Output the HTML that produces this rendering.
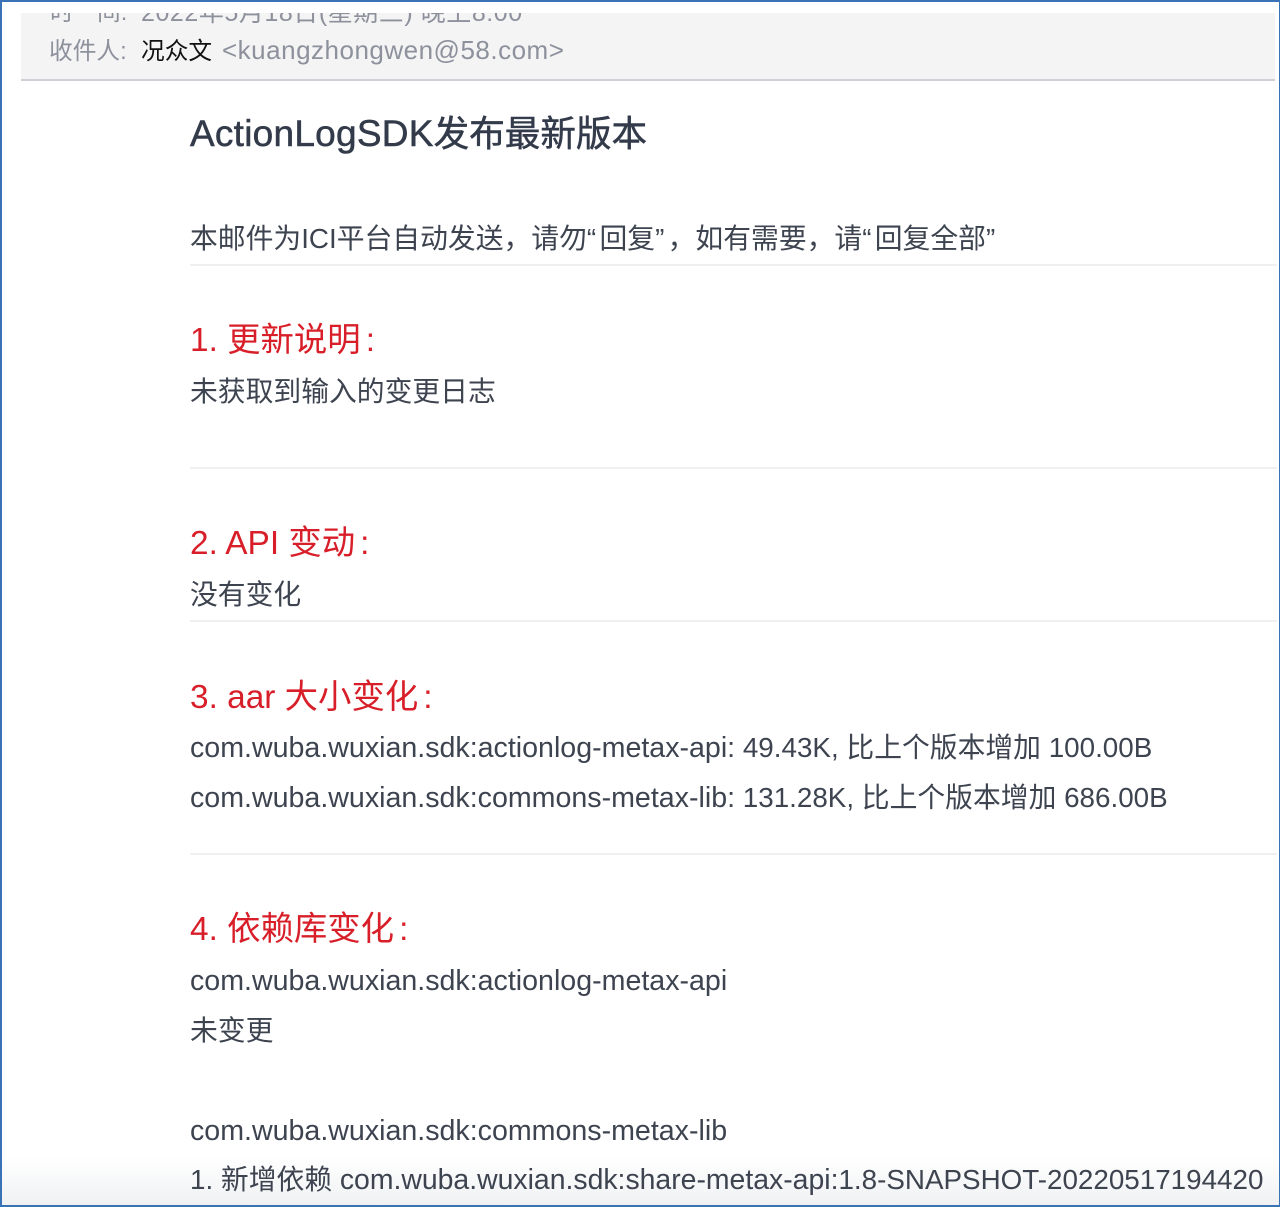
<!DOCTYPE html>
<html><head><meta charset="utf-8">
<style>
html,body{margin:0;padding:0;background:#fff}
#p{position:relative;width:1280px;height:1207px;overflow:hidden;background:#fff;font-family:"Liberation Sans","Noto Sans CJK SC",sans-serif;color:#3d4450}
.t{position:absolute;white-space:nowrap;left:190px;font-size:27.8px;line-height:40px;filter:blur(.35px)}
.r{color:#d81e28;font-size:33.4px;line-height:44px}
.hr{position:absolute;left:190px;right:3px;height:2px;background:#eff0f1}
.l{font-size:28.6px}
.q{letter-spacing:3.3px}
.c{margin-left:5px;display:inline-block}
.h{position:absolute;white-space:nowrap;font-size:23.7px;line-height:40px;color:#8d919c;filter:blur(.35px)}
</style></head><body><div id="p">
<div style="position:absolute;left:0;right:0;bottom:0;height:50px;background:linear-gradient(rgba(236,238,240,0),rgba(236,238,240,.85))"></div>
<div style="position:absolute;left:21px;top:13px;width:1254px;height:66px;background:#f4f4f5;border-bottom:2px solid #cfd0d6"></div>
<div style="position:absolute;left:21px;top:13px;width:1254px;height:66px;overflow:hidden">
<div class="h" style="left:29px;top:-20px">时</div>
<div class="h" style="left:76px;top:-20px">间:</div>
<div class="h" style="left:120px;top:-20px;font-size:25px;letter-spacing:.55px">2022年5月18日(星期三) 晚上8:00</div>
</div>
<div class="h" style="left:49px;top:32px">收件人:</div>
<div class="h" style="left:141px;top:32px;color:#111">况众文</div>
<div class="h" style="left:222px;top:30px;font-size:26px;letter-spacing:.5px">&lt;kuangzhongwen@58.com&gt;</div>
<div class="t" style="top:112px;font-size:35.6px;line-height:44px;color:#333b4b;-webkit-text-stroke:.5px #333b4b"><span style="font-size:37px;letter-spacing:.25px">ActionLogSDK</span>发布最新版本</div>
<div class="t" style="top:219px">本邮件为ICI平台自动发送，请勿<span class="q">“</span>回复<span class="q">”</span>，如有需要，请<span class="q">“</span>回复全部<span class="q">”</span></div>
<div class="hr" style="top:264px"></div>
<div class="t r" style="top:319px">1. 更新说明<span class="c">:</span></div>
<div class="t" style="top:372px">未获取到输入的变更日志</div>
<div class="hr" style="top:467px"></div>
<div class="t r" style="top:522px">2. API 变动<span class="c">:</span></div>
<div class="t" style="top:575px">没有变化</div>
<div class="hr" style="top:620px"></div>
<div class="t r" style="top:676px">3. aar 大小变化<span class="c">:</span></div>
<div class="t" style="top:728px"><span class="l">com.wuba.wuxian.sdk:actionlog-metax-api:</span> 49.43K, 比上个版本增加 100.00B</div>
<div class="t" style="top:778px"><span class="l">com.wuba.wuxian.sdk:commons-metax-lib:</span> 131.28K, 比上个版本增加 686.00B</div>
<div class="hr" style="top:853px"></div>
<div class="t r" style="top:908px">4. 依赖库变化<span class="c">:</span></div>
<div class="t" style="top:961px"><span class="l">com.wuba.wuxian.sdk:actionlog-metax-api</span></div>
<div class="t" style="top:1011px">未变更</div>
<div class="t" style="top:1111px"><span class="l">com.wuba.wuxian.sdk:commons-metax-lib</span></div>
<div class="t" style="top:1160px">1. 新增依赖 <span class="l" style="font-size:28.4px">com.wuba.wuxian.sdk:share-metax-api:</span>1.8-SNAPSHOT-20220517194420</div>
<div style="position:absolute;left:0;top:0;width:1280px;height:1207px;box-sizing:border-box;border:solid #3a73b5;border-width:2px 1px 2px 2px"></div>
</div></body></html>
